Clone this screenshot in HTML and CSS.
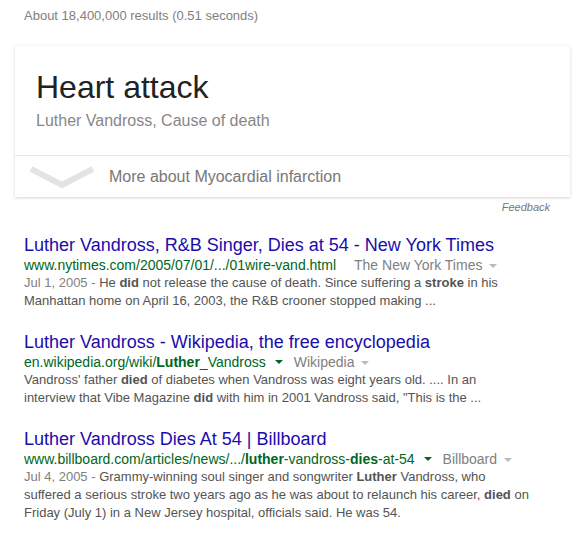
FILE: index.html
```html
<!DOCTYPE html>
<html lang="en">
<head>
  <meta charset="UTF-8" />
  <title>Luther Vandross cause of death - Search</title>
  <link rel="stylesheet" href="styles.css">
</head>
<body>

  <div class="stats">About 18,400,000 results (0.51 seconds)</div>

  <!-- Tarjeta de respuesta -->
  <section class="answer-card">
    <div class="answer-main">
      <div class="answer-title">Heart attack</div>
      <div class="answer-sub">Luther Vandross, Cause of death</div>
    </div>
    <div class="answer-more">
      <svg class="chevron" width="64" height="22" viewBox="0 0 64 22">
        <polyline points="1,3 32,19 63,3" fill="none" stroke="#e3e3e3" stroke-width="6" />
      </svg>
      <span>More about Myocardial infarction</span>
    </div>
  </section>
  <div class="feedback">Feedback</div>

  <!-- Resultados -->
  <div class="results">
    <div class="result">
      <a class="r-title" href="#">Luther Vandross, R&amp;B Singer, Dies at 54 - New York Times</a>
      <div class="r-url">
        <cite>www.nytimes.com/2005/07/01/.../01wire-vand.html</cite>
        <span class="r-source">The New York Times <span class="caret grey"></span></span>
      </div>
      <div class="r-snippet"><span class="r-date">Jul 1, 2005 - </span>He <b>did</b> not release the cause of death. Since suffering a <b>stroke</b> in his Manhattan home on April 16, 2003, the R&amp;B crooner stopped making ...</div>
    </div>

    <div class="result">
      <a class="r-title" href="#">Luther Vandross - Wikipedia, the free encyclopedia</a>
      <div class="r-url">
        <cite>en.wikipedia.org/wiki/<b>Luther</b>_Vandross</cite>
        <span class="caret green"></span>
        <span class="r-source">Wikipedia <span class="caret grey"></span></span>
      </div>
      <div class="r-snippet">Vandross' father <b>died</b> of diabetes when Vandross was eight years old. .... In an interview that Vibe Magazine <b>did</b> with him in 2001 Vandross said, "This is the ...</div>
    </div>

    <div class="result">
      <a class="r-title" href="#">Luther Vandross Dies At 54 | Billboard</a>
      <div class="r-url">
        <cite>www.billboard.com/articles/news/.../<b>luther</b>-vandross-<b>dies</b>-at-54</cite>
        <span class="caret green"></span>
        <span class="r-source">Billboard <span class="caret grey"></span></span>
      </div>
      <div class="r-snippet"><span class="r-date">Jul 4, 2005 - </span>Grammy-winning soul singer and songwriter <b>Luther</b> Vandross, who suffered a serious stroke two years ago as he was about to relaunch his career, <b>died</b> on Friday (July 1) in a New Jersey hospital, officials said. He was 54.</div>
    </div>
  </div>

</body>
</html>
```

FILE: styles.css
```css
body {
  margin: 0;
  padding: 8px 0 0 0;
  font-family: "Liberation Sans", Arial, sans-serif;
  background: #fff;
  color: #222;
}

.stats {
  padding-left: 24px;
  font-size: 13px;
  line-height: 16px;
  color: #808080;
}

/* Tarjeta */
.answer-card {
  margin: 22px 16px 0 15px;
  background: #fff;
  box-shadow: 0 1px 3px rgba(0,0,0,0.18);
}

.answer-main {
  padding: 23px 20px 24px 21px;
  border-bottom: 1px solid #e8e8e8;
}

.answer-title {
  font-size: 32px;
  line-height: 36px;
  color: #222;
}

.answer-sub {
  margin-top: 6px;
  font-size: 16px;
  line-height: 20px;
  color: #878787;
}

.answer-more {
  display: flex;
  align-items: center;
  gap: 15px;
  height: 41px;
  padding-left: 15px;
  font-size: 16px;
  color: #777;
}

.chevron {
  display: block;
}

.feedback {
  text-align: right;
  padding-right: 36px;
  margin-top: 2px;
  font-size: 11px;
  line-height: 16px;
  font-style: italic;
  color: #777;
}

/* Resultados */
.results {
  margin-top: 20px;
  padding-left: 24px;
}

.result {
  margin-bottom: 22px;
}

.r-title {
  display: block;
  font-size: 18px;
  line-height: 20px;
  color: #1a0dab;
  text-decoration: none;
}

.r-url {
  display: flex;
  align-items: center;
  font-size: 14px;
  line-height: 18px;
  margin-top: 1px;
}

.r-url cite {
  font-style: normal;
  color: #006621;
}

.r-source {
  margin-left: 18px;
  color: #808080;
}

.caret {
  display: inline-block;
  width: 0;
  height: 0;
  border-left: 4px solid transparent;
  border-right: 4px solid transparent;
  border-top: 4px solid #999;
  vertical-align: middle;
  margin-left: 3px;
}

.caret.green {
  border-top-color: #006621;
  margin-left: 9px;
  margin-right: -7px;
}

.caret.grey {
  border-top-color: #bbb;
}

.r-snippet {
  font-size: 13px;
  line-height: 18px;
  color: #545454;
  max-width: 506px;
}

.r-snippet b {
  color: #545454;
}

.r-date {
  color: #808080;
}
```
